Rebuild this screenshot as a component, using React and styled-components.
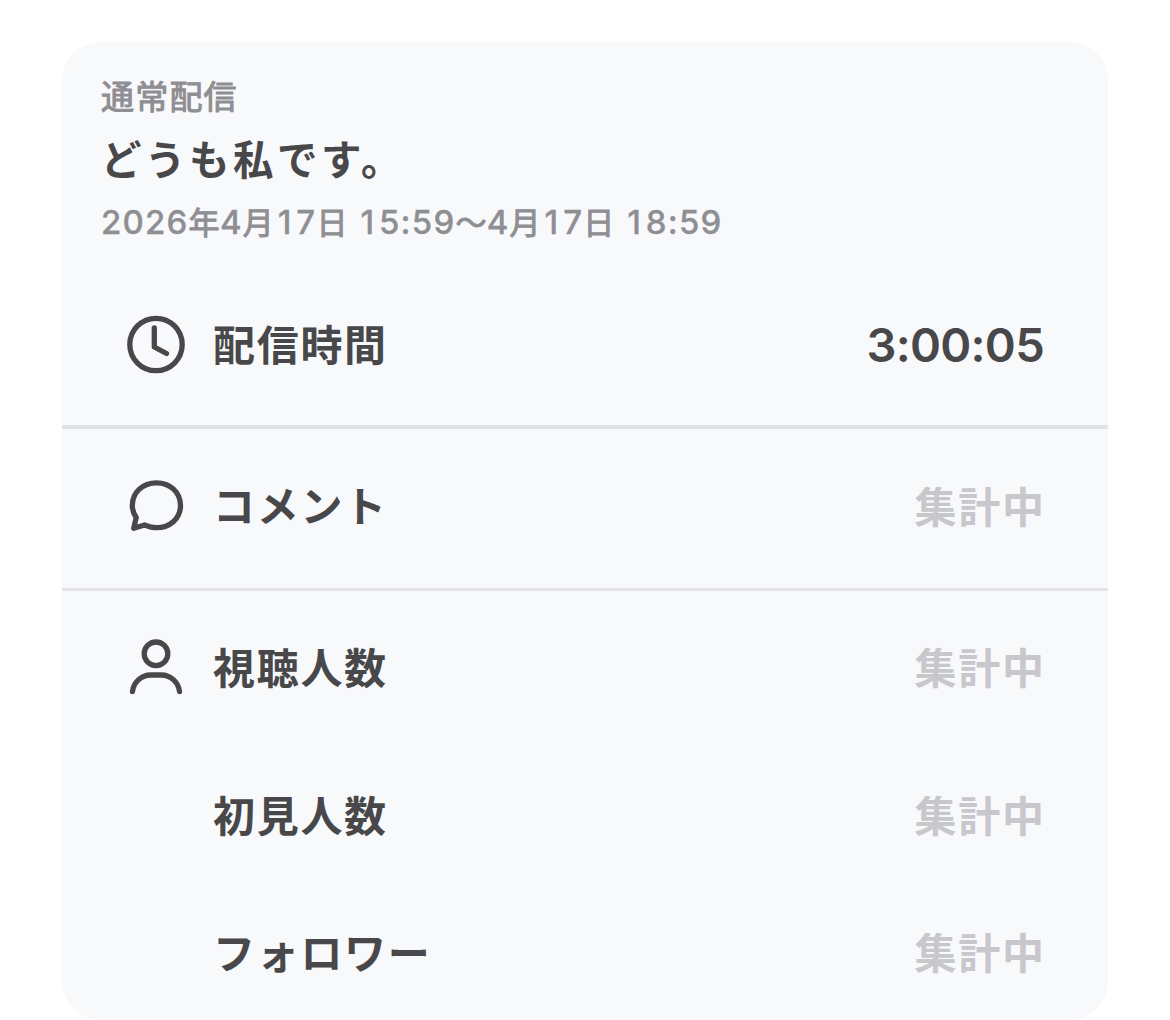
import styled, { createGlobalStyle } from 'styled-components';

const GlobalStyle = createGlobalStyle`
  body {
    margin: 0;
    background: #ffffff;
    font-family: Inter, "Noto Sans CJK JP", sans-serif;
  }
`;

const Page = styled.main`
  box-sizing: border-box;
  height: 1020px;
  padding: 42px 62px 0;
  overflow: hidden;
`;

const Card = styled.section`
  display: flex;
  flex-direction: column;
  height: 978px;
  border-radius: 38px;
  background: #f8f9fb;
  overflow: hidden;
`;

const Header = styled.header`
  box-sizing: border-box;
  height: 222px;
  padding: 30px 38px 0 39px;
  white-space: nowrap;
`;

const Category = styled.div`
  color: #8e8e93;
  font-size: 33px;
  line-height: 50px;
  letter-spacing: 1.2px;
  -webkit-text-stroke: 1px #8e8e93;
`;

const Title = styled.h1`
  margin: 9px 0 0;
  color: #48484a;
  font-size: 40.5px;
  font-weight: 600;
  line-height: 60px;
  letter-spacing: 3.5px;
`;

const Period = styled.div`
  margin-top: 6px;
  color: #8e8e93;
  font-size: 31px;
  line-height: 50px;
  letter-spacing: 0.3px;
  -webkit-text-stroke: 1px #8e8e93;
`;

const Digits = styled.span`
  padding: 0 ${(props) => (props.$one ? 3.7 : 0)}px;
  font-size: 33px;
  font-weight: 500;
  letter-spacing: 1.2px;
  font-feature-settings: "calt" 0;
  -webkit-text-stroke: 0.3px #8e8e93;
`;

const Row = styled.div`
  box-sizing: border-box;
  display: flex;
  align-items: center;
  height: ${(props) => props.$height}px;
  padding: 0 64px ${(props) => props.$lift || 0}px 62px;
  border-bottom: ${(props) => props.$line || 0}px solid ${(props) => props.$lineColor || '#e2e2e7'};
`;

const IconSlot = styled.div`
  display: flex;
  justify-content: center;
  width: 64px;
  margin-right: 25px;
  color: #48484a;

  svg {
    display: block;
    fill: none;
    stroke: currentColor;
    stroke-width: 5.3;
    stroke-linecap: round;
    stroke-linejoin: round;
  }
`;

const Label = styled.span`
  flex: 1;
  padding-top: 2px;
  color: #48484a;
  font-size: 42px;
  font-weight: 600;
  line-height: 60px;
  letter-spacing: 1.7px;
`;

const Duration = styled.span`
  color: #48484a;
  font-size: 47px;
  font-weight: 600;
  line-height: 60px;
  letter-spacing: -0.7px;
  font-feature-settings: "calt" 0;
`;

const Pending = styled.span`
  padding-top: ${(props) => (props.$lift ? 5 : 1)}px;
  color: #c7c7cc;
  font-size: 42px;
  font-weight: 600;
  line-height: 60px;
  letter-spacing: 1.7px;
  margin-right: -1.7px;
`;

const ClockIcon = () => (
  <svg width="64" height="64" viewBox="0 0 64 64">
    <circle cx="32" cy="31.500" r="26.2" />
    <path d="M30.300 15V34L42.500 40.500" />
  </svg>
);

const CommentIcon = () => (
  <svg width="64" height="64" viewBox="0 0 64 64">
    <path d="M12.200 43.500C9.500 39.500 8.300 35.500 8.300 31.500C8.300 18 19 8.800 32.500 8.800C46 8.800 56.500 18 56.500 31.500C56.500 44.500 46 53.700 32.500 53.700C28.500 53.700 24.500 52.500 20.500 51L9.700 54.300Z" />
  </svg>
);

const PersonIcon = () => (
  <svg width="64" height="64" viewBox="0 0 64 64">
    <circle cx="32" cy="17.800" r="11.8" />
    <path d="M8.500 55.500C9.500 46.500 17 39 27 39H37C47 39 54.500 46.500 55.500 55.500" />
  </svg>
);

// the digit 1 is narrower than the rest, so it gets its own side padding
const renderPeriod = (text) =>
  text.split(/(1|[02-9:]+)/).map((part, i) =>
    /^[0-9:]/.test(part) ? (
      <Digits key={i} $one={part === '1'}>{part}</Digits>
    ) : (
      part
    )
  );

const rows = [
  { label: '配信時間', icon: <ClockIcon />, value: '3:00:05', height: 165, line: 4, lineColor: '#e1e2e4' },
  { label: 'コメント', icon: <CommentIcon />, height: 162, line: 3, lift: 6 },
  { label: '視聴人数', icon: <PersonIcon />, height: 154 },
  { label: '初見人数', height: 142 },
  { label: 'フォロワー', height: 132 },
];

function App() {
  return (
    <Page>
      <GlobalStyle />
      <Card>
        <Header>
          <Category>通常配信</Category>
          <Title>どうも私です。</Title>
          <Period>{renderPeriod('2026年4月17日 15:59〜4月17日 18:59')}</Period>
        </Header>
        {rows.map((row) => (
          <Row key={row.label} $height={row.height} $line={row.line} $lineColor={row.lineColor} $lift={row.lift}>
            <IconSlot>{row.icon}</IconSlot>
            <Label>{row.label}</Label>
            {row.value ? <Duration>{row.value}</Duration> : <Pending $lift={row.lift}>集計中</Pending>}
          </Row>
        ))}
      </Card>
    </Page>
  );
}

export default App;
